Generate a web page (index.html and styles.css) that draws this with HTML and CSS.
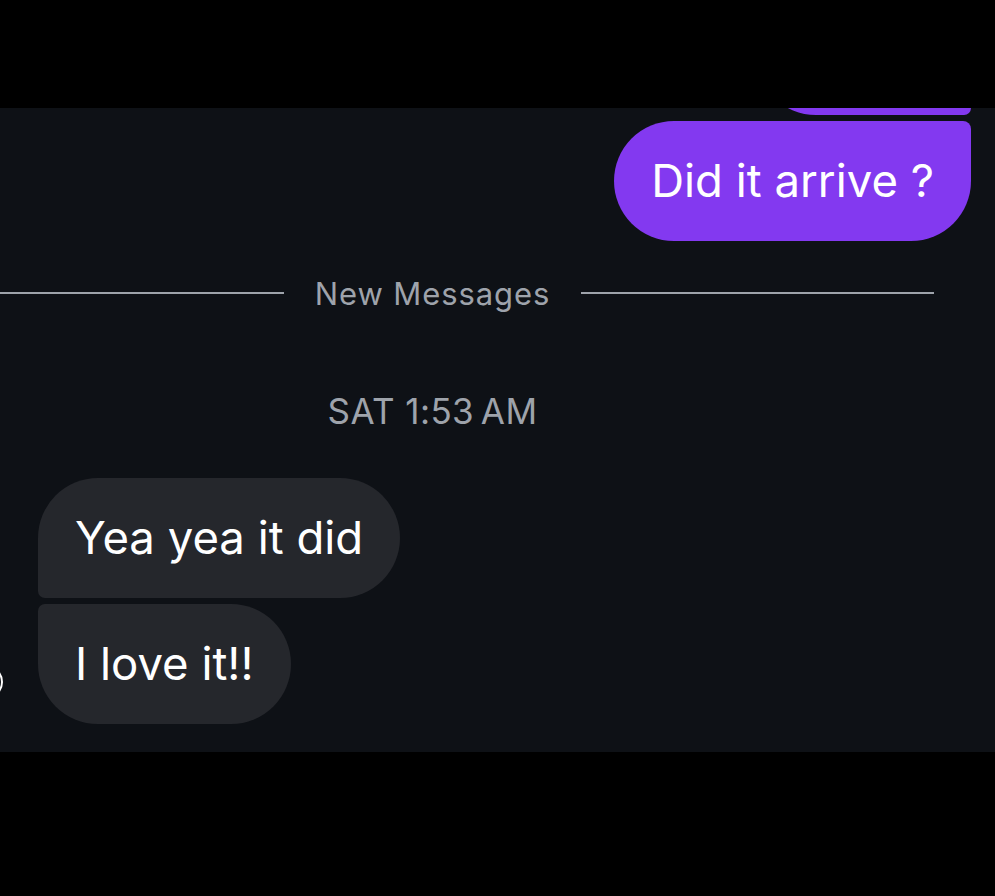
FILE: index.html
```html
<!DOCTYPE html>
<html lang="en">
<head>
  <meta charset="UTF-8" />
  <meta name="viewport" content="width=device-width, initial-scale=1" />
  <title>Chat</title>
  <link rel="stylesheet" href="styles.css">
</head>
<body>

  <div class="top-bar"></div>

  <div class="chat">
    <div class="group sent">
      <div class="bubble first hidden-prev"></div>
      <div class="bubble last">Did it arrive ?</div>
    </div>

    <div class="center-col">
      <div class="divider">
        <span class="line"></span>
        <span class="divider-text">New Messages</span>
        <span class="line"></span>
      </div>
      <div class="timestamp">SAT 1:53&#8201;AM</div>
    </div>

    <div class="group received">
      <span class="avatar"></span>
      <div class="bubble first">Yea yea it did</div>
      <div class="bubble last">I love it!!</div>
    </div>
  </div>

  <div class="bottom-bar"></div>

</body>
</html>
```

FILE: styles.css
```css
* {
  box-sizing: border-box;
}

body {
  margin: 0;
  background-color: #000;
  font-family: Inter, "Noto Sans", sans-serif;
  overflow: hidden;
  height: 896px;
}

.top-bar {
  height: 108px;
}

.chat {
  height: 644px;
  background-color: #0e1116;
  overflow: hidden;
  display: flex;
  flex-direction: column;
}

.group {
  display: flex;
  flex-direction: column;
  gap: 6px;
  position: relative;
}
.group.sent {
  align-items: flex-end;
  padding-right: 24px;
  margin-top: -113px;
}
.group.received {
  align-items: flex-start;
  padding-left: 38px;
  margin-top: 47px;
}

.bubble {
  font-size: 45.5px;
  line-height: 52px;
  padding: 34px 37px;
  color: #fff;
  border-radius: 60px;
  white-space: nowrap;
}
.sent .bubble {
  background-color: #8339f0;
}
.received .bubble {
  background-color: #25272c;
}

.sent .bubble.first {
  border-bottom-right-radius: 7px;
}
.sent .bubble.last {
  border-top-right-radius: 8px;
}
.received .bubble.first {
  border-bottom-left-radius: 7px;
}
.received .bubble.last {
  border-top-left-radius: 7px;
}

.hidden-prev {
  width: 215px;
  height: 120px;
}

.avatar {
  position: absolute;
  left: -31px;
  top: 187px;
  width: 34px;
  height: 34px;
  border: 2px solid #fff;
  border-radius: 50%;
}

.center-col {
  margin-left: -69px;
  width: 1003px;
  display: flex;
  flex-direction: column;
  align-items: center;
}

.divider {
  width: 100%;
  display: grid;
  grid-template-columns: 1fr auto 1fr;
  align-items: center;
  gap: 31px;
  margin-top: 32px;
  height: 40px;
}
.line {
  height: 2px;
  background-color: #9ea3ab;
}
.divider-text {
  font-size: 31px;
  letter-spacing: 0.9px;
  color: #9ea3ab;
}

.timestamp {
  margin-top: 78px;
  font-size: 35px;
  line-height: 40px;
  letter-spacing: 0.4px;
  color: #9ea3ab;
}
```
